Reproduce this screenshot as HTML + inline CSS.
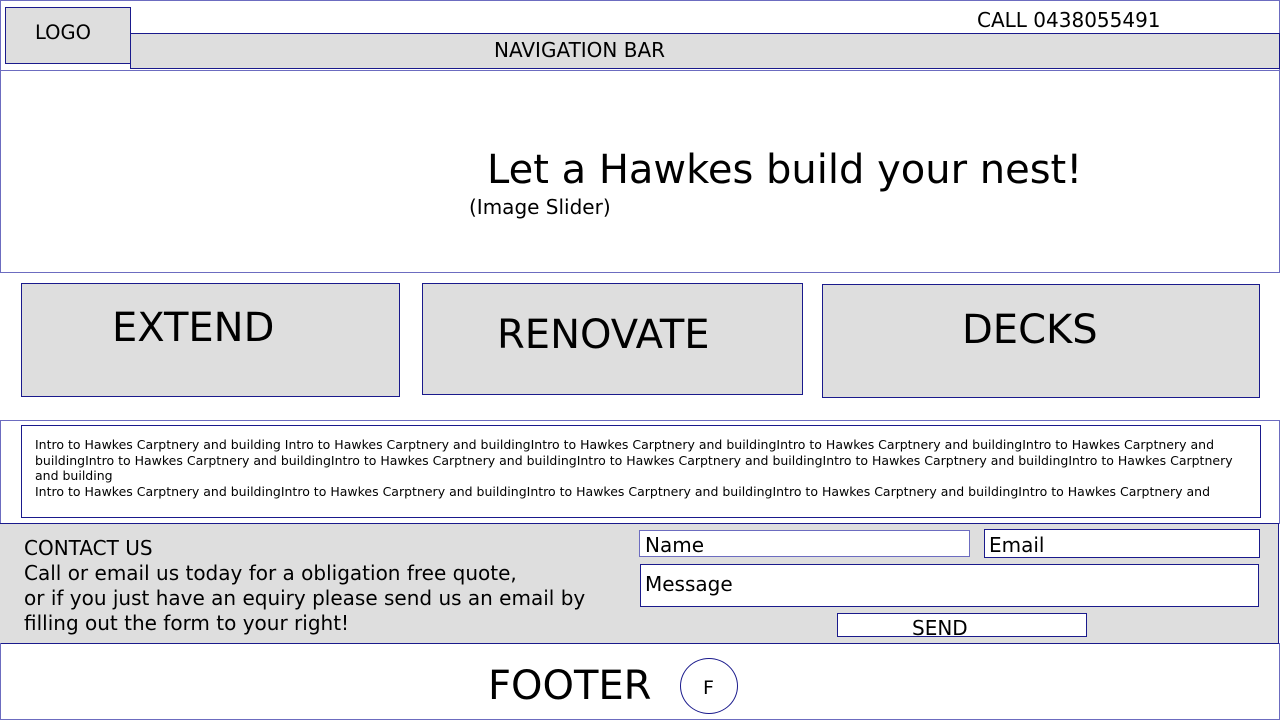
<!DOCTYPE html>
<html><head><meta charset="utf-8"><style>
*{margin:0;padding:0;box-sizing:border-box}
body{width:1280px;height:720px;position:relative;background:#fff;font-family:"DejaVu Sans","Liberation Sans",sans-serif;color:#000;overflow:hidden}
.a{position:absolute}
.t{position:absolute;line-height:1;white-space:nowrap}
.g{background:#dedede}
.b{border:1px solid #1a1a8c}
.l{border:1px solid #6c6cc0}
</style></head><body>
<div class="a l" style="left:0;top:0;width:1280px;height:71px;border-bottom-color:#1a1a8c"></div>
<div class="a g b" style="left:5px;top:7px;width:126px;height:57px"></div>
<div class="t" style="left:35px;top:23px;font-size:19.5px">LOGO</div>
<div class="a g b" style="left:130px;top:33px;width:1150px;height:36px"></div>
<div class="t" style="left:494px;top:40px;font-size:20px">NAVIGATION BAR</div>
<div class="t" style="left:977px;top:10px;font-size:20px">CALL 0438055491</div>

<div class="a l" style="left:0;top:70px;width:1280px;height:203px"></div>
<div class="t" style="left:487px;top:150px;font-size:40px">Let a Hawkes build your nest!</div>
<div class="t" style="left:469px;top:197px;font-size:20px">(Image Slider)</div>

<div class="a g b" style="left:21px;top:283px;width:379px;height:114px"></div>
<div class="t" style="left:112px;top:308px;font-size:40px">EXTEND</div>
<div class="a g b" style="left:422px;top:283px;width:381px;height:112px"></div>
<div class="t" style="left:497px;top:315px;font-size:40px">RENOVATE</div>
<div class="a g b" style="left:822px;top:284px;width:438px;height:114px"></div>
<div class="t" style="left:962px;top:310px;font-size:40px">DECKS</div>

<div class="a l" style="left:0;top:420px;width:1280px;height:104px"></div>
<div class="a b" style="left:21px;top:425px;width:1240px;height:93px"></div>
<div class="a" style="left:35px;top:437px;font-size:12.5px;line-height:15.5px;white-space:nowrap">Intro to Hawkes Carptnery and building Intro to Hawkes Carptnery and buildingIntro to Hawkes Carptnery and buildingIntro to Hawkes Carptnery and buildingIntro to Hawkes Carptnery and<br>buildingIntro to Hawkes Carptnery and buildingIntro to Hawkes Carptnery and buildingIntro to Hawkes Carptnery and buildingIntro to Hawkes Carptnery and buildingIntro to Hawkes Carptnery<br>and building<br>Intro to Hawkes Carptnery and buildingIntro to Hawkes Carptnery and buildingIntro to Hawkes Carptnery and buildingIntro to Hawkes Carptnery and buildingIntro to Hawkes Carptnery and</div>

<div class="a g" style="left:0;top:523px;width:1279px;height:121px;border-top:1px solid #1a1a8c;border-bottom:1px solid #1a1a8c;border-right:1px solid #1a1a8c"></div>
<div class="a" style="left:24px;top:536px;font-size:20px;line-height:25px;white-space:nowrap">CONTACT US<br>Call or email us today for a obligation free quote,<br>or if you just have an equiry please send us an email by<br>filling out the form to your right!</div>
<div class="a l" style="left:639px;top:530px;width:331px;height:27px;background:#fff"></div>
<div class="t" style="left:645px;top:535px;font-size:20px">Name</div>
<div class="a b" style="left:984px;top:529px;width:276px;height:29px;background:#fff"></div>
<div class="t" style="left:989px;top:535px;font-size:20px">Email</div>
<div class="a b" style="left:640px;top:564px;width:619px;height:43px;background:#fff"></div>
<div class="t" style="left:645px;top:574px;font-size:20px">Message</div>
<div class="a b" style="left:837px;top:613px;width:250px;height:24px;background:#fff"></div>
<div class="t" style="left:912px;top:618px;font-size:20px">SEND</div>

<div class="a l" style="left:0;top:643px;width:1280px;height:77px;border-top:none"></div>
<div class="t" style="left:488px;top:666px;font-size:40px">FOOTER</div>
<div class="a" style="left:680px;top:658px;width:58px;height:56px;border:1px solid #1a1a8c;border-radius:50%"></div>
<div class="t" style="left:703px;top:679px;font-size:19px">F</div>
</body></html>
